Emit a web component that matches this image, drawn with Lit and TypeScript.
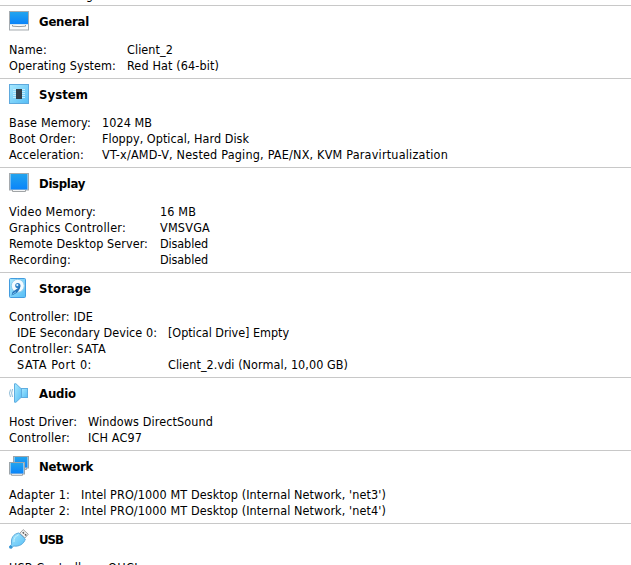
import { LitElement, html, css, svg, nothing } from "lit";
import { customElement, property } from "lit/decorators.js";

type Label = [text: string, width: number];
interface Row { name: Label; value?: Label; indent?: boolean }
interface Section { icon: string; title: Label; column: number; rows: Row[] }

const sections: Section[] = [
  { icon: "general", title: ["General", 50], column: 118, rows: [
    { name: ["Name:", 38], value: ["Client_2", 46] },
    { name: ["Operating System:", 107], value: ["Red Hat (64-bit)", 92] },
  ] },
  { icon: "system", title: ["System", 49], column: 93, rows: [
    { name: ["Base Memory:", 82], value: ["1024 MB", 50] },
    { name: ["Boot Order:", 67], value: ["Floppy, Optical, Hard Disk", 147] },
    { name: ["Acceleration:", 75], value: ["VT-x/AMD-V, Nested Paging, PAE/NX, KVM Paravirtualization", 346] },
  ] },
  { icon: "display", title: ["Display", 46], column: 151, rows: [
    { name: ["Video Memory:", 87], value: ["16 MB", 36] },
    { name: ["Graphics Controller:", 117], value: ["VMSVGA", 50] },
    { name: ["Remote Desktop Server:", 139], value: ["Disabled", 48] },
    { name: ["Recording:", 62], value: ["Disabled", 48] },
  ] },
  { icon: "storage", title: ["Storage", 52], column: 159, rows: [
    { name: ["Controller: IDE", 84] },
    { name: ["IDE Secondary Device 0:", 140], value: ["[Optical Drive] Empty", 121], indent: true },
    { name: ["Controller: SATA", 97] },
    { name: ["SATA Port 0:", 75], value: ["Client_2.vdi (Normal, 10,00 GB)", 180], indent: true },
  ] },
  { icon: "audio", title: ["Audio", 37], column: 79, rows: [
    { name: ["Host Driver:", 68], value: ["Windows DirectSound", 125] },
    { name: ["Controller:", 61], value: ["ICH AC97", 54] },
  ] },
  { icon: "network", title: ["Network", 54], column: 72, rows: [
    { name: ["Adapter 1:", 61], value: ["Intel PRO/1000 MT Desktop (Internal Network, 'net3')", 305] },
    { name: ["Adapter 2:", 61], value: ["Intel PRO/1000 MT Desktop (Internal Network, 'net4')", 305] },
  ] },
  { icon: "usb", title: ["USB", 24], column: 99, rows: [
    { name: ["USB Controller:", 88], value: ["OHCI", 30] },
  ] },
];

const defs = svg`<defs>
  <linearGradient id="screen" x1="0" y1="0" x2="0" y2="1"><stop offset="0" stop-color="#22a4ee"/><stop offset="1" stop-color="#0a84fa"/></linearGradient>
  <linearGradient id="pale" x1="0" y1="0" x2="1" y2="1"><stop offset="0" stop-color="#a8e9ff"/><stop offset="1" stop-color="#55bdf5"/></linearGradient>
</defs>`;

const icons: Record<string, unknown> = {
  general: svg`
    <rect x=".5" y=".5" width="19" height="18.5" fill="#fafafa" stroke="#a5abb0"/>
    <rect x="1" y="1" width="18" height="12" fill="url(#screen)"/>
    <path d="M1 13.5H19" stroke="#d5e6f1"/>
    <path d="M3.5 14V15.2Q10 16 16.5 15.2V14" fill="none" stroke="#979da1"/>`,
  system: svg`
    <rect x=".5" y=".5" width="19" height="19" fill="url(#pale)" stroke="#5ea9dd"/>
    <path d="M4 5.5H16M4 7.5H16M4 9.5H16M4 11.5H16M4 13.5H16" stroke="#c4edfd"/>
    <rect x="7" y="5" width="6" height="10" fill="#343f48"/>`,
  display: svg`
    <rect x=".5" y=".5" width="19" height="16.5" fill="#dce6ec" stroke="#a5aaae"/>
    <rect x="1.5" y="1" width="17" height="15.5" fill="url(#screen)"/>
    <path d="M3.5 17V18.5H16.5V17" fill="#f5f5f5" stroke="#a0a4a6"/>`,
  storage: svg`
    <rect x=".5" y=".5" width="16" height="19" rx="1" fill="url(#pale)" stroke="#439cdf"/>
    <circle cx="8.8" cy="7.8" r="6.5" fill="#f4fbff" stroke="#8acbed"/>
    <circle cx="8.8" cy="7.5" r="2.6" fill="#2f80c6"/>
    <circle cx="8.3" cy="7.1" r="1.1" fill="#dff3ff"/>
    <path d="M11.3 7.5C11.5 12 8 15.5 2.5 17.6L3.5 14L9 10Z" fill="#2674ba"/>
    <path d="M3.5 16.3L7 13.8" stroke="#7dc4ef"/>`,
  audio: svg`
    <path d="M3.5 6Q1.8 10 3.5 14M1.5 6.5Q-.5 10 1.5 14" fill="none" stroke="#8bb9d5"/>
    <path d="M5.5 .8H7L12.5 6V14L7 19.2H5.5Z" fill="url(#pale)" stroke="#5fade0"/>
    <rect x="12.5" y="5.5" width="6" height="9" fill="url(#pale)" stroke="#5fade0"/>`,
  network: svg`
    <rect x="4.5" y=".5" width="15" height="11.5" fill="#dae8ef" stroke="#9da5aa"/>
    <rect x="5.5" y="1" width="13" height="10.5" fill="url(#screen)"/>
    <path d="M12 13.5H17.5V12" fill="none" stroke="#a5aaae"/>
    <rect x=".5" y="6.5" width="15" height="11.5" fill="#e7f2f7" stroke="#9da5aa"/>
    <rect x="1.5" y="7" width="13" height="10.5" fill="url(#screen)"/>
    <path d="M2.5 18V19.3H13.5V18" fill="#f3f3f3" stroke="#9da2a5"/>`,
  usb: svg`
    <path d="M10.8 4.3L14.2 .6L19.3 5.2L15.9 9Z" fill="#f2f2f2" stroke="#a2a2a2"/>
    <path d="M13.7 3.3L15 4.5M16 5.3L17.3 6.5" stroke="#555" stroke-width="1.5"/>
    <path d="M9.8 4L16.3 10C15 14.8 10.5 17.8 4.8 17L2.5 19L.7 17.5L2.7 15.2C1.5 9 4.7 4.8 9.8 4Z" fill="url(#pale)" stroke="#5eabdc"/>
    <path d="M5 13C4.6 9.5 6.5 6.8 9.6 5.8" fill="none" stroke="#c5f1ff"/>
    <circle cx="1.7" cy="18.1" r="1.7" fill="#3997d6"/>`,
};

/* A single line of text tracked out to a given advance width. */
@customElement("fitted-label")
export class FittedLabel extends LitElement {
  @property() text = "";
  @property({ type: Number }) width = 0;

  static styles = css`
    :host { display: inline-block; white-space: pre; }
  `;

  render() { return html`<span>${this.text}</span>`; }

  updated() {
    const span = this.renderRoot.querySelector("span")!;
    span.style.letterSpacing = "0px";
    const natural = span.getBoundingClientRect().width;
    span.style.letterSpacing = `${(this.width - natural) / this.text.length}px`;
  }
}

@customElement("detail-section")
export class DetailSection extends LitElement {
  @property({ attribute: false }) section!: Section;

  static styles = css`
    :host { display: block; flex: none; border-top: 1px solid #c8c8c8; padding: 0 9px 4px; }
    .header { display: flex; height: 36px; align-items: flex-start; gap: 10px; }
    .icon { display: block; width: 20px; height: 20px; margin-top: 5px; flex: none; overflow: visible; }
    .title { font-size: 13px; font-weight: bold; line-height: 16px; margin-top: 8px; }
    .row { display: grid; height: 16px; line-height: 16px; white-space: nowrap; }
    .indent { padding-left: 8px; }
  `;

  label([text, width]: Label) {
    return html`<fitted-label .text=${text} .width=${width}></fitted-label>`;
  }

  render() {
    const { icon, title, column, rows } = this.section;
    return html`
      <div class="header">
        <svg class="icon" viewBox="0 0 20 20">${defs}${icons[icon]}</svg>
        <div class="title">${this.label(title)}</div>
      </div>
      ${rows.map((row) => html`
        <div class="row" style="grid-template-columns:${column}px 1fr">
          <div class=${row.indent ? "indent" : "name"}>${this.label(row.name)}</div>
          ${row.value ? html`<div>${this.label(row.value)}</div>` : nothing}
        </div>`)}
    `;
  }
}

@customElement("app-root")
export class AppRoot extends LitElement {
  static styles = css`
    :host {
      display: flex; flex-direction: column; width: 631px; height: 565px; overflow: hidden;
      background: #fff; color: #000;
      font-family: "DejaVu Sans Condensed", "DejaVu Sans", sans-serif; font-stretch: condensed; font-size: 12.5px;
    }
    .previous { display: flex; align-items: flex-end; height: 5px; flex: none; overflow: hidden; padding-left: 86px; line-height: 16px; }
    .tail { margin-bottom: 2px; }
  `;

  render() {
    return html`
      <div class="previous"><span class="tail">g</span></div>
      ${sections.map((s) => html`<detail-section .section=${s}></detail-section>`)}
    `;
  }
}
